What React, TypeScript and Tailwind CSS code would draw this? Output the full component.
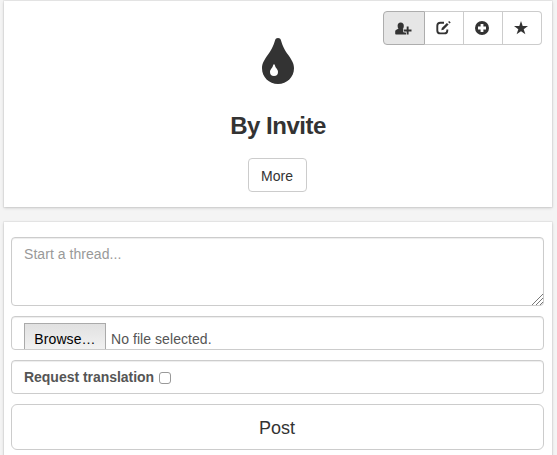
import type { ReactNode } from 'react';

const field = 'w-full rounded-[4px] border border-[#ccc] bg-white px-3 shadow-[inset_0_1px_1px_rgba(0,0,0,0.075)]';
const card = 'mx-auto w-[548px] bg-white shadow-[0_0_0_1px_rgba(0,0,0,0.04),0_1px_3px_rgba(0,0,0,0.17)]';

function ToolButton({ label, className, children }: { label: string; className: string; children: ReactNode }) {
  return (
    <button aria-label={label} className={`flex h-[34px] items-center justify-center border ${className}`}>
      {children}
    </button>
  );
}

function UserAddIcon() {
  return (
    <svg className="mt-px mr-px" width="17" height="14" viewBox="0 0 17 14" fill="#333">
      <ellipse cx="5.700" cy="3.900" rx="3.100" ry="3.500" />
      <path d="M3.200 6.800h5l1.300 1v2.800h2.300v2H1.300c-.7 0-1.100-.4-1.100-1.100V9.600c0-1 .4-1.500 1.200-1.900z" />
      <path d="M11.700 4.600h1.900v2.900h2.900v2h-2.900v2.900h-1.900V9.500H8.900v-2h2.800z" stroke="#e6e6e6" strokeWidth="1.400" paintOrder="stroke" />
    </svg>
  );
}

function EditIcon() {
  return (
    <svg width="15" height="14" viewBox="0 0 15 14" fill="none" stroke="#333">
      <path d="M8 1.700H4.400Q1.300 1.700 1.300 4.700v4.700q0 3 3 3H8.300q3 0 3-3V8.500" strokeWidth="1.900" />
      <path d="M5.300 9.300l.5-2.300 5.100-5.100 1.700 1.700-5.100 5.100z" fill="#333" stroke="none" />
      <path d="M13.200 0l1.500 1.500-1.100 1.100-1.500-1.500z" fill="#333" stroke="none" />
    </svg>
  );
}

function PlusIcon() {
  return (
    <svg width="14" height="14" viewBox="0 0 14 14">
      <circle cx="7" cy="7" r="7" fill="#333" />
      <path d="M7 3v8M3 7h8" stroke="#fff" strokeWidth="2.800" />
    </svg>
  );
}

function StarIcon() {
  return (
    <svg className="mr-[2px]" width="14" height="14" viewBox="0 0 14 14" fill="#333">
      <path d="M7 0l1.700 5.100H14L9.700 8.200l1.700 5.100L7 10.200l-4.400 3.100 1.700-5.100L0 5.100h5.300z" />
    </svg>
  );
}

function DropIcon() {
  return (
    <svg width="32" height="46" viewBox="0 0 32 46">
      <path d="M16 0c1.500 0 2.500.8 3 2.400 1.700 5.900 3.600 9.200 7.300 14.700C29.800 22.300 32 25.500 32 30.200 32 39 25 46 16 46S0 39 0 30.200c0-4.700 2.200-7.900 5.700-13.100C9.400 11.600 11.300 8.300 13 2.400 13.500.8 14.500 0 16 0z" fill="#333" />
      <path d="M12 26.200c.4 0 .7.300.8.700.4 1.500.9 2.300 1.800 3.700.9 1.300 1.400 2.200 1.400 3.500a4 4 0 0 1-8 0c0-1.300.5-2.200 1.400-3.500.9-1.400 1.400-2.200 1.800-3.700.1-.4.400-.7.800-.7z" fill="#fff" />
    </svg>
  );
}

export default function App() {
  return (
    <main className="h-[455px] w-[557px] overflow-hidden bg-[#f4f4f4] pt-px pr-[1px] font-['Liberation_Sans',Arial,sans-serif] text-sm text-[#333]">
      <section className={`${card} relative h-[206px]`}>
        <div className="absolute top-[10px] right-[10px] flex">
          <ToolButton label="Invite user" className="w-[42px] rounded-l-[4px] border-[#adadad] bg-[#e6e6e6]"><UserAddIcon /></ToolButton>
          <ToolButton label="Edit" className="w-[39px] border-l-0 border-[#ccc] bg-white pr-px"><EditIcon /></ToolButton>
          <ToolButton label="Add" className="w-[39px] border-l-0 border-[#ccc] bg-white pr-[2px]"><PlusIcon /></ToolButton>
          <ToolButton label="Favorite" className="w-[39px] rounded-r-[4px] border-l-0 border-[#ccc] bg-white"><StarIcon /></ToolButton>
        </div>
        <div className="flex flex-col items-center pt-[37px]">
          <DropIcon />
          <h1 className="mt-[29px] text-2xl leading-[26px] font-bold tracking-[-0.5px]">By Invite</h1>
          <button className="mt-[19px] mr-[2px] h-[34px] w-[59px] rounded-[4px] border border-[#ccc] bg-white pt-[2px]">More</button>
        </div>
      </section>

      <section className={`${card} mt-[15px] flex h-[260px] flex-col gap-[10px] pt-[15px] pr-[8px] pl-[7px]`}>
        <div className="relative">
          <textarea placeholder="Start a thread..." className={`${field} block h-[69px] resize-none py-[6px] leading-5 tracking-[0.05px] placeholder:text-[#999]`} />
          <svg className="absolute right-px bottom-px" width="11" height="11" viewBox="0 0 11 11" stroke="#777" strokeWidth="1">
            <path d="M0 11L11 0M4 11l7-7M8 11l3-3" />
          </svg>
        </div>
        <div className={`${field} flex h-[34px] shrink-0 items-start overflow-hidden pt-[6px] text-[#555]`}>
          <button className="h-[30px] w-[82px] shrink-0 border border-[#aaa] bg-linear-to-b from-[#e1e1e1] to-[#f3f3f3] pt-[2px] text-black tracking-[0.1px]">Browse…</button>
          <span className="ml-[5px] pt-[6px] leading-5 tracking-[0.06px]">No file selected.</span>
        </div>
        <label className={`${field} flex h-[34px] shrink-0 items-center font-bold text-[#555]`}>
          <span className="tracking-[-0.03px]">Request translation</span>
          <input type="checkbox" className="mt-[2px] ml-[5px] size-3 appearance-none rounded-[3px] border border-[#999] bg-white" />
        </label>
        <button className="h-[46px] shrink-0 rounded-[6px] border border-[#ccc] bg-white pt-[2px] pr-px text-lg">Post</button>
      </section>
    </main>
  );
}
